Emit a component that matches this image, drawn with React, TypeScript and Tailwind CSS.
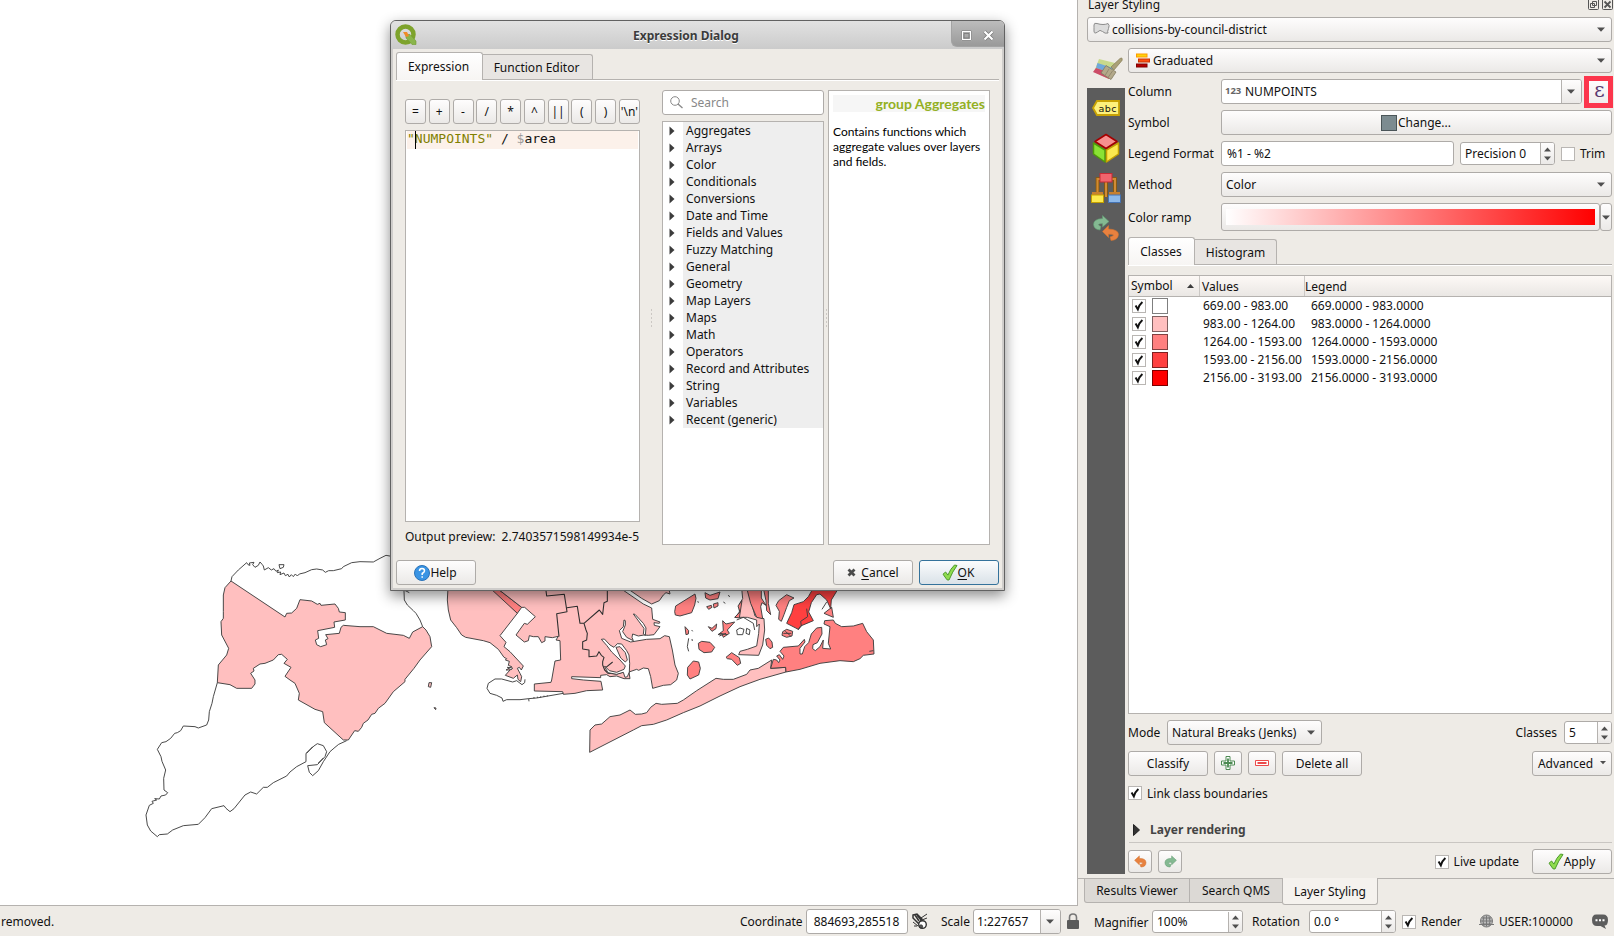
import React from "react";

type Kids = { children?: React.ReactNode; className?: string };

const face = "border border-[#aeaba8] rounded-[3px] bg-linear-to-b from-[#fefdfd] to-[#ebe9e7]";
const field = "border border-[#aeaba8] rounded-[3px] bg-white";

function Button({ children, className = "" }: Kids) {
  return <div className={`flex items-center justify-center shrink-0 ${face} ${className}`}>{children}</div>;
}

function Down({ className = "" }: { className?: string }) {
  return (
    <svg width="8" height="5" viewBox="0 0 8 5" className={`shrink-0 ${className}`}>
      <path d="M0 .5h8L4 4.8z" fill="#4f4f4f" />
    </svg>
  );
}

function Combo({ children, className = "" }: Kids) {
  return (
    <div className={`flex items-center h-[25px] pr-[6px] ${face} ${className}`}>
      {children}
      <Down className="ml-auto" />
    </div>
  );
}

function Spin({ text, className = "" }: { text: string; className?: string }) {
  return (
    <div className={`flex items-center h-[23px] shrink-0 overflow-hidden ${field} ${className}`}>
      <span className="pl-[4px] flex-1 whitespace-nowrap">{text}</span>
      <div className="w-[14px] h-full border-l border-[#b5b2af] bg-linear-to-b from-[#fefdfd] to-[#ebe9e7] flex flex-col items-center justify-center gap-[4px]">
        <svg width="7" height="5" viewBox="0 0 7 5"><path d="M0 4.5h7L3.5 .5z" fill="#4f4f4f" /></svg>
        <svg width="7" height="5" viewBox="0 0 7 5"><path d="M0 .5h7L3.5 4.5z" fill="#4f4f4f" /></svg>
      </div>
    </div>
  );
}

function Check({ on = true, className = "" }: { on?: boolean; className?: string }) {
  return (
    <div className={`w-[14px] h-[14px] shrink-0 border border-[#b9b6b3] bg-white ${className}`}>
      {on && (
        <svg width="12" height="12" viewBox="0 0 12 12">
          <path d="M2.6 5.6 4.8 9.4Q6.3 4.6 9.4 2" fill="none" stroke="#111" strokeWidth="2" />
        </svg>
      )}
    </div>
  );
}

function GreenCheck() {
  return (
    <svg width="16" height="17" viewBox="0 0 16 17" className="shrink-0">
      <path d="M1 10.2 3.6 8l2.3 3.1Q8.600 4.500 12.500 1l2.500.5Q10.500 7.500 7 16L5 15.800z" fill="#8fdc4f" stroke="#4d9a2c" strokeWidth="1" />
    </svg>
  );
}

const UNDO = "M.8 7 7 1.200V4.500Q15.500 4.300 15.700 10Q15.500 15.500 9 15.700L8 12.300Q11.500 12 11.500 10.300Q11 9.300 7 9.500V12.800z";

function Undo({ size }: { size: number }) {
  return <svg width={size} height={size} viewBox="0 0 17 17"><path d={UNDO} fill="#e8813f" stroke="#d4732f" strokeWidth=".7" /></svg>;
}
function Redo({ size }: { size: number }) {
  return (
    <svg width={size} height={size} viewBox="0 0 17 17">
      <path d={UNDO} transform="translate(17 0) scale(-1 1)" fill="#84b992" stroke="#5f9a70" strokeWidth=".7" />
    </svg>
  );
}

function MapCanvas() {
  return (
    <svg width="1077" height="905" viewBox="0 0 1077 905" className="block">
      <g stroke="#3c3c3c" strokeWidth="2.8" strokeLinejoin="round" fill="none">
        <g transform="translate(130 540) scale(.33333)">
          <path d="M303 123 306 110 325 90 350 68 354 74 360 76 358 69 372 67 368 74 375 82 385 76 390 66 397 74 400 78 403 90 415 83 424 90 432 86 438 94 445 90 442 98 452 96 450 104 462 99 466 107 474 103 478 111 484 104 490 110 496 102 502 108 508 102 525 98 545 89 560 87 578 90 586 97 596 92 610 92 635 86 640 80 665 68 690 65 730 66 750 55 768 46 790 50 M450 86 447 74 462 74 460 82Z M822 150 838 158 M822 152 823 180 832 195 850 212 858 220 870 240 878 260" />
          <path fill="#ffbfbf" d="M303 123 465 231 470 220 485 219 500 205 510 179 545 183 562 193 570 190 573 196 615 192 625 205 628 216 646 218 646 240 612 246 614 262 563 272 566 295 556 300 560 314 572 320 590 314 586 300 594 296 587 284 628 280 633 262 640 256 690 260 730 260 770 280 820 286 838 295 848 276 878 260 888 270 900 290 905 320 870 360 852 385 825 418 825 425 810 438 790 455 765 490 745 505 735 520 725 523 714 540 700 550 695 562 685 574 674 572 655 600 640 600 583 548 578 515 555 508 505 480 508 460 495 430 480 420 465 409 483 382 462 370 472 358 455 343 445 344 430 360 405 370 390 372 370 385 372 393 362 400 375 420 375 432 365 445 320 445 300 434 262 428 265 375 290 345 296 325 275 285 273 245 280 235 280 215 280 165 285 143Z" />
          <path d="M262 428 250 470 246 490 238 515 236 540 230 555 205 564 195 560 160 558 152 572 142 578 134 580 122 595 108 605 95 608 82 628 93 650 96 664 107 690 101 715 102 750 113 758 107 765 93 768 88 777 74 776 80 780 66 784 70 790 58 796 48 825 52 855 62 873 82 890 88 884 112 882 128 870 160 857 205 853 225 833 245 806 282 797 288 805 300 815 312 806 345 765 362 756 380 762 400 742 412 742 430 728 450 718 470 708 480 696 500 680 528 665 528 640 552 618 562 611 580 617 590 635 585 650 562 674 533 677 538 697 548 707 565 692 580 665 600 635 615 622 626 613 650 602 M530 640 548 620 M564 670 580 654" />
          <path fill="#ffbfbf" d="M897 428 905 428 902 442 895 440Z M912 503 918 504 917 509Z" />
        </g>
        <g transform="translate(430 580) scale(.33333)">
          <path fill="#ffbfbf" d="M54 24 52 60 55 90 62 120 80 143 95 165 107 172 160 182 180 188 205 208 222 232 230 236 226 240 238 244 235 256 245 260 228 270 240 270 226 286 250 295 262 285 264 298 272 305 275 290 270 280 262 265 268 262 274 270 280 258 240 215 222 200 228 187 210 167 262 100 190 24Z" />
          <path fill="#ff8080" d="M180 24 262 100 275 82 200 24Z" />
          <path fill="#ffbfbf" d="M200 24 275 82 284 82 316 110 292 133 283 130 258 165 283 186 295 182 298 167 310 170 325 170 335 188 345 183 345 170 367 173 385 169 378 180 390 182 392 240 375 243 365 300 363 307 313 312 313 333 398 335 400 343 435 340 470 332 518 330 513 304 460 300 425 296 425 290 512 293 512 286 530 284 540 290 560 288 582 296 600 296 597 276 620 268 626 271 640 264 655 266 662 290 668 325 700 316 722 314 740 300 745 280 735 255 727 210 718 170 704 167 690 176 650 178 602 186 575 175 568 152 580 140 582 120 586 122 586 135 578 155 590 172 610 182 606 172 608 162 625 168 642 165 655 166 672 164 690 140 673 136 672 128 688 130 690 126 668 118 665 84 640 72 570 24Z" />
          <path d="M347 24 350 48 403 43 411 95 380 101 387 170 M411 83 442 79 450 130 462 130 508 90 518 103 522 68 532 64 532 24 M462 130 468 150 472 160 470 180 458 185 458 207 477 210 477 230 500 228 507 215 514 226 522 232 518 245 518 255 524 270 534 280 560 282 580 276 598 275 M528 262 548 246" stroke="#2e2e2e" strokeWidth="3.200" />
          <path fill="#fff" d="M514 178 523 177 540 195 552 202 562 191 575 192 590 212 597 225 599 250 598 276 592 290 585 292 580 277 560 283 534 278 526 264 524 258 538 272 560 277 582 268 586 258 570 240 545 216 530 196Z" />
          <path fill="#ffbfbf" d="M558 202 570 200 586 218 592 240 586 246 572 234Z" />
          <path fill="#fff" d="M610 102 615 103 640 130 648 144 646 166 640 162 642 145Z M232 262 248 264 243 270Z" />
          <path fill="#ffbfbf" d="M590 24 635 55 665 72 688 62 700 45 708 38 720 42 718 32 700 24Z" />
          <path d="M285 298 284 308 276 314 260 302 248 306 215 297 195 297 175 310 171 325 180 340 200 346 216 354 219 364 230 359 270 359 296 356 297 364 M296 356 320 354 400 340 M312 355V351 M322 354V350 M332 353V349 M342 351V347 M352 349V346" />
        </g>
        <g transform="translate(640 580) scale(.33333)">
          <path fill="#ffbfbf" d="M-151 517-150 450-135 435-115 432-90 410-60 405-30 390-14 403 5 402 20 398 32 382 48 370 65 373 112 370 130 360 170 332 228 295 250 298 280 298 320 283 330 270 355 265 395 240 392 265 437 262 438 276 360 298 300 320 240 348 180 378 130 398 80 420 40 433 5 437-20 450Z" />
          <path fill="#ff8080" d="M392 265 400 238 410 240 416 248 420 240 410 228 418 224 428 238 432 228 420 214 430 202 475 198 493 178 495 186 480 205 480 222 487 222 494 200 506 188 514 162 530 144 545 142 546 162 532 188 519 194 518 206 526 212 540 200 550 180 548 205 572 207 565 190 570 140 552 132 554 122 580 120 586 130 605 140 640 138 668 130 680 155 700 180 702 222 670 226 660 236 640 245 600 242 540 250 480 268 438 276 437 262Z M688 214 700 212 M104 95 107 78 165 42 168 55 164 75 155 98 120 108 106 105Z M143 262 160 243 176 246 181 265 176 285 150 297 142 285Z M175 190 185 184 210 187 224 202 215 216 192 218 177 208Z M258 232 275 218 298 233 302 250 292 256 275 238 262 236Z M377 178 386 174 396 186 398 202 390 206 380 196Z M195 38 210 46 240 36 234 56 210 60 197 54Z M200 80 214 76 216 82 206 88Z M220 72 234 68 234 78 222 84Z M205 140 216 145 230 132 228 146 216 154Z M248 122 258 132 284 126 262 150 268 160 250 172 246 162 234 164 250 152Z M135 140 146 152 145 162 138 164Z M416 62 440 44 462 54 448 62 440 82 432 104 424 124 416 118 418 94 408 76Z M428 155 440 148 458 154 456 168 440 172 426 166Z M552 100 575 82 580 112Z" />
          <path fill="#ffbfbf" d="M305 24 308 56 298 72 298 96 286 112 322 112 350 120 350 140 358 132 356 160 350 198 322 208 300 214 296 224 356 226 368 195 374 150 372 116 345 108 322 24Z" />
          <path fill="#ff8080" d="M320 24 332 70 350 112 368 116 362 80 366 68 378 76 364 54 364 24Z M370 24 385 24 385 70 392 104 380 92 378 62Z M306 62 294 78 300 96 284 112 298 114Z" />
          <path fill="#ff4040" d="M520 24 505 50 490 65 462 74 455 98 440 130 475 148 482 138 520 122 506 96 514 68 530 44 540 42 560 60 572 86 574 60 596 24Z" />
          <path d="M500 86 503 110 482 124 484 138 474 150 M560 66 546 88 M290 150 300 144 312 148 308 164 292 164Z M320 145 330 150 328 164 318 160Z M290 120 310 112 340 130 344 150 M146 175 142 200 146 214 M155 150 158 154 M156 177 157 183 M172 65 177 67 M250 66 256 70 M264 46 270 50 M240 160 262 164 M238 168 258 160 M430 160 454 160 M436 154 452 168" />
        </g>
      </g>
    </svg>
  );
}

const groups = ["Aggregates", "Arrays", "Color", "Conditionals", "Conversions", "Date and Time", "Fields and Values", "Fuzzy Matching", "General", "Geometry", "Map Layers", "Maps", "Math", "Operators", "Record and Attributes", "String", "Variables", "Recent (generic)"];
const operators = ["=", "+", "-", "/", "*", "^", "||", "(", ")", "'\\n'"];

function Grip() {
  return (
    <svg width="3" height="18" viewBox="0 0 3 18" className="shrink-0">
      {[1, 5, 9, 13, 17].map((y) => <rect key={y} x="1" y={y - 0.5} width="1" height="1" fill="#aaa6a1" />)}
    </svg>
  );
}

function ExpressionDialog() {
  return (
    <div className="absolute left-[390px] top-[20px] w-[615px] h-[571px] border border-[#626262] rounded-t-[6px] bg-[#cfcdcb] shadow-[0_5px_14px_rgba(0,0,0,0.45)] flex flex-col pb-[2px] overflow-hidden">
      <div className="h-[28px] shrink-0 flex items-start bg-linear-to-b from-[#e2e2e2] to-[#cbcbcb]">
        <svg width="22" height="22" viewBox="0 0 22 22" className="ml-[4px] mt-[3px]">
          <circle cx="10.500" cy="10.500" r="8" fill="none" stroke="#7ea32c" strokeWidth="4.500" />
          <path d="M11 10.500 15 10.500 21 17V20.500H17L11 14z" fill="#8ab54b" stroke="#6f9c2d" strokeWidth=".6" />
          <path d="M8 8h4l2 4-3 1z" fill="#f08b27" />
        </svg>
        <div className="flex-1 text-center pl-[4px] pt-[6px] leading-[18px] font-bold text-[#3b3b3b] [text-shadow:0_1px_0_#ffffff]">Expression Dialog</div>
        <div className="w-[53px] h-[26px] rounded-bl-[6px] border-l border-b border-[#a3a3a3] bg-linear-to-b from-[#bcbcbc] to-[#9a9a9a] flex items-center gap-[11px] pl-[9px] pt-[3px]">
          <svg width="11" height="11" viewBox="0 0 11 11">
            <path d="M1 1h9v9H1z" fill="none" stroke="#fff" strokeWidth="2" />
            <path d="M.5.5h10v10H.5zM3 3.500h5v4.500H3z" fill="none" stroke="#777" strokeWidth=".8" />
          </svg>
          <svg width="11" height="11" viewBox="0 0 11 11">
            <path d="M1.500 1.500l8 8M9.500 1.500l-8 8" stroke="#777" strokeWidth="3.600" />
            <path d="M1.500 1.500l8 8M9.500 1.500l-8 8" stroke="#fff" strokeWidth="2.200" />
          </svg>
        </div>
      </div>
      <div className="mx-[2px] flex-1 bg-[#eeebe6] flex flex-col">
        <div className="flex items-end h-[31px] mx-[3px] border-b border-[#b5b2af] shadow-[0_1px_0_#ffffff] shrink-0">
          <div className="w-[87px] h-[28px] -mb-px border border-b-0 border-[#b5b2af] rounded-t-[3px] bg-linear-to-b from-white to-[#f7f5f3] flex items-center justify-center pt-px pr-[2px]">Expression</div>
          <div className="w-[110px] h-[25px] border border-l-0 border-b-0 border-[#b5b2af] rounded-tr-[3px] bg-[#e8e5e2] flex items-center justify-center pt-[2px] pr-[2px]">Function Editor</div>
        </div>
        <div className="flex pl-[12px] pt-[10px] h-[465px] shrink-0">
          <div className="w-[235px] pt-[9px] flex flex-col">
            <div className="flex justify-between h-[25px] shrink-0">
              {operators.map((o) => <Button key={o} className="w-[21px] whitespace-nowrap">{o}</Button>)}
            </div>
            <div className="mt-[6px] h-[392px] shrink-0 border border-[#b5b2af] bg-white p-px pt-0">
              <div className="h-[18px] bg-[#fcf1ea] pb-[2px] font-['DejaVu_Sans_Mono'] text-[13px] leading-[16px] whitespace-pre flex items-center">
                <span className="text-[#808000]">"</span>
                <span className="w-px -mr-px h-[18px] bg-black translate-y-px" />
                <span className="text-[#808000]">NUMPOINTS"</span>
                <span> / </span>
                <span className="text-[#999]">$</span>
                <span>area</span>
              </div>
            </div>
            <div className="h-[30px] shrink-0 flex items-center justify-between whitespace-pre"><span>Output preview:</span><span className="-ml-px mr-px">2.7403571598149934e-5</span></div>
          </div>
          <div className="w-[22px] flex items-center justify-center"><Grip /></div>
          <div className="w-[162px] flex flex-col">
            <div className={`h-[25px] flex items-center shrink-0 ${field}`}>
              <svg width="13" height="13" viewBox="0 0 13 13" className="ml-[7px] mr-[8px]">
                <circle cx="5" cy="5" r="4.300" fill="none" stroke="#888" /><path d="M8 8l4.500 4" stroke="#888" strokeWidth="1.300" />
              </svg>
              <span className="text-[#888] pt-px">Search</span>
            </div>
            <div className="mt-[6px] h-[424px] border border-[#b5b2af] bg-white">
              {groups.map((g) => (
                <div key={g} className="h-[17px] flex items-center">
                  <svg width="6" height="10" viewBox="0 0 6 10" className="ml-[6px] mr-[8px]"><path d="M.5 .5 5.500 5 .5 9.500z" fill="#3c3c3c" /></svg>
                  <div className="bg-[#eeeeee] flex-1 h-full pl-[3px] leading-[17px] whitespace-nowrap">{g}</div>
                </div>
              ))}
            </div>
          </div>
          <div className="w-[4px] flex items-center justify-center"><Grip /></div>
          <div className="w-[162px] border border-[#b5b2af] bg-white px-[4px] pt-[4px] font-['Lato']">
            <div className="h-[17px] bg-[#f6f6f6] text-right font-bold text-[14px] leading-[18px] text-[#93b023]">group Aggregates</div>
            <div className="mt-[12px] text-[12px] leading-[15px] text-black whitespace-nowrap">Contains functions which<br />aggregate values over layers<br />and fields.</div>
          </div>
        </div>
        <div className="flex mx-[3px] mt-[15px]">
          <Button className="w-[80px] h-[25px] pr-px">
            <svg width="16" height="16" viewBox="0 0 16 16">
              <circle cx="8" cy="8" r="7.500" fill="#3a94e4" stroke="#2a72b8" />
              <path d="M5.500 6q0-2.500 2.500-2.500T10.500 6Q10.500 7 8.200 8.500V10M8.200 11.200v1.600" fill="none" stroke="#fff" strokeWidth="1.500" />
            </svg>Help
          </Button>
          <Button className="w-[80px] h-[25px] ml-auto">
            <svg width="9" height="9" viewBox="0 0 9 9" className="mr-[5px]"><path d="M1.500 1.500l6 6M7.500 1.500l-6 6" stroke="#4a4a4a" strokeWidth="2.800" /></svg>
            <span><u className="underline-offset-2">C</u>ancel</span>
          </Button>
          <div className="ml-[6px] w-[80px] h-[25px] pr-[2px] flex items-center justify-center border border-[#34729b] rounded-[3px] bg-linear-to-b from-[#fbfcfd] to-[#dae2e8]">
            <GreenCheck /><span><u className="underline-offset-2">O</u>K</span>
          </div>
        </div>
      </div>
    </div>
  );
}

function Sidebar() {
  return (
    <div className="w-[38px] shrink-0 flex flex-col bg-[#5c5c5c]">
      <div className="h-[40px] bg-[#eeebe6] flex items-center justify-center pl-[4px] pt-[2px]">
        <svg width="30" height="24" viewBox="0 0 30 24">
          <path d="M6 2 22 6 16 22 1 15z" fill="#c8d98c" />
          <path d="M4.500 6 20 11 18 16 3 11z" fill="#6fa8dc" />
          <path d="M3 11 18 16 16 22 0 15z" fill="#cc4c68" />
          <path d="M18 10 27 1.500Q30 0 29 3.500L21 13z" fill="#aaa078" stroke="#857b55" strokeWidth=".7" />
          <path d="M13 8.500 23 15 18 22.500 8 16z" fill="#b3a98a" stroke="#827a60" strokeWidth=".8" />
          <path d="M12 18.500 16 12M15 20.500 19.500 14" stroke="#8b8268" strokeWidth=".8" />
        </svg>
      </div>
      <div className="h-[40px] flex items-center justify-center">
        <svg width="28" height="16" viewBox="0 0 28 16">
          <path d="M1 8 5 1H27V15H5z" fill="#fdf07c" stroke="#c9a204" strokeWidth="1.800" />
          <text x="6.500" y="11.800" fontSize="9.500" fontFamily="DejaVu Sans" letterSpacing=".5" fill="#111">abc</text>
        </svg>
      </div>
      <div className="h-[40px] flex items-center justify-center">
        <svg width="28" height="30" viewBox="0 0 28 30" strokeLinejoin="round">
          <path d="M1.500 10 13 17V29L1.500 21z" fill="#8ae234" stroke="#4f9a0a" strokeWidth="1.500" />
          <path d="M26.500 10 14.500 17V29L26.500 21z" fill="#fce94f" stroke="#c4a000" strokeWidth="1.500" />
          <path d="M14 1.500 25 8.500 14 15.500 3 8.500z" fill="#f78f8f" stroke="#a40000" strokeWidth="1.500" />
        </svg>
      </div>
      <div className="h-[40px] flex items-center justify-center">
        <svg width="30" height="30" viewBox="0 0 30 30">
          <path d="M6.500 21V6H24V21M15 8V24" fill="none" stroke="#8f5902" strokeWidth="3.600" />
          <path d="M6.500 21V6H24V21M15 8V24" fill="none" stroke="#d18b35" strokeWidth="2" />
          <rect x="9" y=".5" width="12" height="8.500" fill="#f0646c" stroke="#c52a34" />
          <path d="M1 19h11v3H1zM18 19h11v3H18z" fill="#c78030" />
          <rect x=".5" y="22" width="12" height="7.500" fill="#fce94f" stroke="#c4a000" />
          <rect x="17.500" y="22" width="12" height="7.500" fill="#8db9ea" stroke="#4573b3" />
        </svg>
      </div>
      <div className="h-[40px] flex items-center justify-center">
        <svg width="26" height="26" viewBox="0 0 26 26">
          <path d="M16 6.500 9.500.5V3.500Q.5 4 .5 9.500Q1 14.500 7 15L8 11.500Q5.500 10.500 5.500 9.500Q6 8.500 9.500 8.700V12z" fill="#84b992" stroke="#5f9a70" strokeWidth=".6" />
          <path d="M9.500 16.500 15.500 10.500V14Q25.500 14.500 25.500 19.500Q25 25 18 25.500L17 22Q20.500 21 20.500 20Q20 19 15.500 19.200V22.500z" fill="#e8813f" stroke="#d4732f" strokeWidth=".6" />
        </svg>
      </div>
    </div>
  );
}

const classes = [
  { c: "bg-white", v: "669.00 - 983.00", l: "669.0000 - 983.0000" },
  { c: "bg-[#ffbfbf]", v: "983.00 - 1264.00", l: "983.0000 - 1264.0000" },
  { c: "bg-[#ff8080]", v: "1264.00 - 1593.00", l: "1264.0000 - 1593.0000" },
  { c: "bg-[#ff4040]", v: "1593.00 - 2156.00", l: "1593.0000 - 2156.0000" },
  { c: "bg-[#ff0000]", v: "2156.00 - 3193.00", l: "2156.0000 - 3193.0000" },
];

function Row({ label, children }: { label: string; children: React.ReactNode }) {
  return (
    <div className="flex items-center h-[25px] mt-[6px]">
      <span className="w-[93px] shrink-0 whitespace-nowrap">{label}</span>
      {children}
    </div>
  );
}

function Dock() {
  return (
    <div className="w-[536px] h-[906px] flex flex-col">
      <div className="h-[17px] flex items-start pl-[10px] pr-0">
        <span className="leading-[9px]">Layer Styling</span>
        <svg width="26" height="10" viewBox="0 0 26 10" className="ml-auto" fill="none" stroke="#555">
          <path d="M.5 0V8.500q0 1 1 1h8q1 0 1-1V0M14.500 0V8.500q0 1 1 1h8q1 0 1-1V0" />
          <path d="M4.500 1.500h4v4h-4zM2.500 3.500h4v4h-4z" /><path d="M16.500 1.500l6 6M22.500 1.500l-6 6" strokeWidth="1.800" />
        </svg>
      </div>
      <Combo className="ml-[9px] w-[525px] pl-[5px]">
        <svg width="17" height="13" viewBox="0 0 17 13" className="mr-[2px] -mt-[2px]">
          <path d="M1 3Q1 .5 4 1.500T10 2.500 15 1.500Q17 3 15.500 6.500T15 11Q12 12 9.500 9.500T4.500 10Q1 12.500 1 9T1 3z" fill="#dcdcdc" stroke="#8c8c8c" />
        </svg>
        collisions-by-council-district
      </Combo>
      <div className="flex ml-[9px] mt-[6px] h-[826px] shrink-0">
        <Sidebar />
        <div className="w-[484px] ml-[3px] flex flex-col">
          <Combo className="pl-[7px]">
            <svg width="14" height="15" viewBox="0 0 14 15" className="mr-[3px] -mt-px">
              <rect x=".5" y="1" width="10.500" height="3" fill="#fdd40a" stroke="#ff9a00" />
              <rect x="2.500" y="6" width="11" height="3" fill="#ff4f10" stroke="#c93400" />
              <rect x=".5" y="11" width="10.500" height="3" fill="#b80000" stroke="#800000" />
            </svg>
            Graduated
          </Combo>
          <Row label="Column">
            <div className={`w-[361px] h-[25px] shrink-0 flex items-center overflow-hidden ${field}`}>
              <span className="ml-[3px] w-[20px] pb-px text-[9.5px] leading-[12px] font-bold text-[#666]">123</span>
              <span>NUMPOINTS</span>
              <div className="ml-auto w-[20px] h-full border-l border-[#b5b2af] bg-linear-to-b from-[#fefdfd] to-[#ebe9e7] flex items-center justify-center"><Down className="mr-px" /></div>
            </div>
            <div className="ml-[2px] w-[29px] h-[32px] shrink-0 border-[5px] border-[#fc364c] bg-linear-to-b from-[#fefdfd] to-[#efedeb] flex items-center justify-center font-['DejaVu_Serif'] text-[20px] leading-[20px] pb-[4px] pl-[2px] text-[#5b3a70]">ε</div>
          </Row>
          <Row label="Symbol">
            <Button className="w-[391px] h-[25px] pr-px"><span className="w-[16px] h-[16px] mr-px bg-[#7c8b90] border border-[#4b5558]" />Change...</Button>
          </Row>
          <Row label="Legend Format">
            <div className={`w-[233px] h-[25px] flex items-center pl-[5px] ${field}`}>%1 - %2</div>
            <Spin text="Precision 0" className="ml-[6px] w-[95px]" />
            <Check on={false} className="ml-[6px] mr-[5px]" />Trim
          </Row>
          <Row label="Method"><Combo className="w-[391px] pl-[4px]">Color</Combo></Row>
          <div className="flex items-center h-[28px] mt-[6px]">
            <span className="w-[93px] pt-[2px]">Color ramp</span>
            <Button className="w-[379px] h-[28px]"><span className="w-[369px] h-[16px] bg-linear-to-r from-white to-[#ff0000] [--tw-gradient-position:to_right]" /></Button>
            <Button className="w-[12px] h-[28px]"><Down /></Button>
          </div>
          <div className="mt-[6px] flex items-end h-[28px] shrink-0 border-b border-[#b5b2af] shadow-[0_1px_0_#ffffff]">
            <div className="w-[67px] h-[28px] -mb-px border border-b-0 border-[#b5b2af] rounded-t-[3px] bg-linear-to-b from-white to-[#f7f5f3] flex items-center justify-center pr-px">Classes</div>
            <div className="w-[82px] h-[25px] border border-l-0 border-b-0 border-[#b5b2af] rounded-tr-[3px] bg-[#e8e5e2] flex items-center justify-center pt-[2px]">Histogram</div>
          </div>
          <div className="mt-[10px] h-[439px] shrink-0 border border-[#b5b2af] bg-white">
            <div className="flex h-[21px] border-b border-[#b5b2af] bg-linear-to-b from-[#fdf9f6] to-[#eae7e4] leading-[22px]">
              <div className="w-[71px] border-r border-[#cbc8c5] pl-[2px] pr-[5px] flex items-center">Symbol<svg width="7" height="4" viewBox="0 0 7 4" className="ml-auto"><path d="M0 4h7L3.500 0z" fill="#3c3c3c" /></svg></div>
              <div className="w-[105px] border-r border-[#cbc8c5] pl-[2px]">Values</div>
              <div>Legend</div>
            </div>
            {classes.map((k) => (
              <div key={k.v} className="h-[18px] flex items-center pl-[3px]">
                <Check /><span className={`ml-[6px] w-[16px] h-[16px] border border-black/50 ${k.c}`} />
                <span className="ml-[35px] w-[108px] whitespace-nowrap">{k.v}</span><span>{k.l}</span>
              </div>
            ))}
          </div>
          <div className="mt-[6px] h-[25px] flex items-center shrink-0">
            <span className="w-[39px]">Mode</span><Combo className="w-[155px] pl-[4px] whitespace-nowrap">Natural Breaks (Jenks)</Combo>
            <span className="ml-auto mr-[7px]">Classes</span><Spin text="5" className="w-[48px]" />
          </div>
          <div className="mt-[6px] h-[25px] flex items-start gap-[6px] shrink-0">
            <Button className="w-[80px] h-[25px]">Classify</Button>
            <Button className="w-[28px] h-[24px]">
              <svg width="14" height="14" viewBox="0 0 14 14"><path d="M5 .5h4V5h4.500v4H9v4.500H5V9H.5V5H5z" fill="#fff" stroke="#4c8a52" /><path d="M7 2.500v9M2.500 7h9" stroke="#4c8a52" strokeWidth="1.800" /></svg>
            </Button>
            <Button className="w-[28px] h-[24px]">
              <svg width="14" height="6" viewBox="0 0 14 6"><path d="M.5.5h13v5H.5z" fill="#fff" stroke="#ec4b4b" /><path d="M2.500 3h9" stroke="#ec4b4b" strokeWidth="2" /></svg>
            </Button>
            <Button className="w-[80px] h-[25px]">Delete all</Button>
            <Button className="w-[80px] h-[25px] ml-auto">Advanced<Down className="ml-[7px] -mt-[3px] w-[6px]" /></Button>
          </div>
          <div className="mt-[8px] h-[18px] flex items-center shrink-0"><Check className="mr-[5px]" /><span className="relative top-px">Link class boundaries</span></div>
          <div className="mt-[18px] h-[23px] ml-px flex items-start border-b border-[#c9c6c2] shrink-0">
            <svg width="7" height="12" viewBox="0 0 7 12" className="ml-[4px] mr-[10px] mt-[4px]"><path d="M.5.500 6.500 6 .5 11.500z" fill="#333" stroke="#222" /></svg>
            <span className="font-bold text-[#444] leading-[19px]">Layer rendering</span>
          </div>
          <div className="mt-[6px] h-[25px] flex items-center shrink-0">
            <Button className="w-[24px] h-[23px]"><Undo size={13} /></Button>
            <Button className="w-[24px] h-[23px] ml-[6px]"><Redo size={13} /></Button>
            <Check className="ml-auto mr-[5px]" />Live update
            <Button className="w-[80px] h-[25px] ml-[13px] pr-px"><GreenCheck />Apply</Button>
          </div>
        </div>
      </div>
      <div className="mt-[4px] flex items-start border-t border-[#b5b2af] pl-[6px] shrink-0">
        <div className="w-[106px] h-[24px] border border-t-0 border-[#b5b2af] rounded-bl-[3px] bg-[#dcd9d5] flex items-center justify-center">Results Viewer</div>
        <div className="w-[92px] h-[24px] border-b border-[#b5b2af] bg-[#dcd9d5] flex items-center justify-center">Search QMS</div>
        <div className="w-[96px] h-[27px] -mt-px border border-t-0 border-[#b5b2af] rounded-b-[3px] bg-[#f5f2ee] flex items-center justify-center pt-[2px]">Layer Styling</div>
      </div>
    </div>
  );
}

function StatusBar() {
  return (
    <div className="h-[30px] flex items-center whitespace-nowrap">
      <span className="w-[740px] pt-[2px] pl-px">removed.</span>
      <span className="w-[66px] pt-[2px]">Coordinate</span>
      <div className={`w-[102px] h-[25px] flex items-center justify-center pt-px pr-px ${field}`}>884693,285518</div>
      <svg width="16" height="17" viewBox="0 0 16 17" className="ml-[4px] mr-[13px]" fill="none" stroke="#333">
        <path d="M1 2 5 1 10 6 7 11 1 5zM3 2l4 6M5 2l4 5" strokeWidth="1.500" /><path d="M1 9 6 13M2 13h3M9 5l6-4M10 7l5-2" />
        <circle cx="10.500" cy="11.500" r="3.800" fill="#fff" strokeWidth="1.400" /><circle cx="9" cy="13.500" r="1.600" fill="#555" />
      </svg>
      <span className="w-[32px] pt-[2px]">Scale</span>
      <div className={`w-[88px] h-[25px] flex items-center overflow-hidden ${field}`}>
        <span className="pl-[3px] pt-px">1:227657</span>
        <div className="ml-auto w-[20px] h-full border-l border-[#b5b2af] bg-linear-to-b from-[#fefdfd] to-[#ebe9e7] flex items-center justify-center"><Down className="mr-px" /></div>
      </div>
      <svg width="12" height="16" viewBox="0 0 12 16" className="ml-[6px] mr-[15px]">
        <path d="M2.500 8V4.500q0-3.500 3.500-3.500T9.500 4.500V8" fill="none" stroke="#777" strokeWidth="1.600" /><rect y="7" width="12" height="9" rx="1" fill="#5a5a5a" />
      </svg>
      <div className="flex items-center flex-1 pt-px">
        <span className="w-[58px] pt-[2px]">Magnifier</span>
        <Spin text="100%" className="w-[91px] pt-px" />
        <span className="ml-[9px] w-[57px] pt-px">Rotation</span>
        <Spin text="0.0 °" className="w-[87px]" />
        <Check className="ml-[6px] mr-[5px]" /><span className="w-[58px]">Render</span>
        <svg width="15" height="15" viewBox="0 0 15 15" className="mr-[5px]" fill="none" stroke="#777">
          <circle cx="7.500" cy="7" r="6" fill="#bbb" /><path d="M2 7h11M3 4h9M3 10h9M7.500 1.500v11M5 2.500Q3 7 5 12M10 2.500Q12 7 10 12" /><path d="M0 10.500h15" />
        </svg>
        <span className="w-[93px] pt-px">USER:100000</span>
        <svg width="16" height="15" viewBox="0 0 16 15">
          <path d="M5 .5h6q5 0 5 5.500T12.500 11.500L14 15 8.500 12H5Q0 12 0 6T5 .5z" fill="#5d5d5d" /><path d="M3.500 6.300h2M7 6.300h2M10.500 6.300h2" stroke="#fff" strokeWidth="2" />
        </svg>
      </div>
    </div>
  );
}

export default function App() {
  return (
    <div className="relative w-[1614px] h-[936px] overflow-hidden bg-[#eeebe6] font-['Noto_Sans',sans-serif] text-[12px] leading-[18px] text-[#111111]">
      <div className="flex h-[906px]">
        <div className="w-[1078px] h-[906px] shrink-0 bg-white border-r border-b border-[#b5b2af]"><MapCanvas /></div>
        <Dock />
      </div>
      <StatusBar />
      <ExpressionDialog />
    </div>
  );
}
